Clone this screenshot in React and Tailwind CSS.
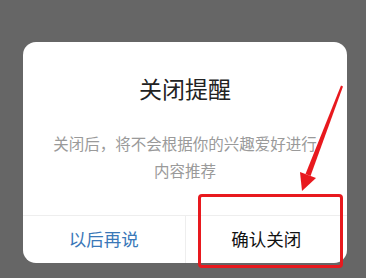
import React from 'react';

const font = { fontFamily: '"Noto Sans CJK SC", "Noto Sans", sans-serif' };

const Arrow = () => (
  <svg className="absolute inset-0 pointer-events-none" width="366" height="278" viewBox="0 0 366 278">
    <polygon points="341,85.5 343,86.5 310.5,175.9 305.5,174.1" fill="#e8191e" />
    <polygon points="302,191 300,172 316,178" fill="#e8191e" />
  </svg>
);

const App = () => {
  return (
    <div className="relative w-[366px] h-[278px] bg-[#666666] overflow-hidden" style={font}>
      <div className="pt-[42px] pl-[23px]">
        <div className="w-[324px] h-[221px] bg-white rounded-[13px] flex flex-col">
          <div className="pt-[31px] text-center text-[23px] leading-[30px] text-[#222]">关闭提醒</div>
          <p className="mt-[27px] text-center text-[15.5px] leading-[27px] text-[#9a9a9a]">
            关闭后，将不会根据你的兴趣爱好进行<br />内容推荐
          </p>
          <div className="mt-auto h-[48px] flex border-t border-[#eeeeee]">
            <button className="flex-1 text-[17.5px] text-[#3a78b8] border-r border-[#eeeeee]">以后再说</button>
            <button className="flex-1 text-[17.5px] text-[#111]">确认关闭</button>
          </div>
        </div>
      </div>
      <div className="absolute left-[198px] top-[194px] w-[145px] h-[74px] border-[3px] border-[#e8191e] rounded-[4px]" />
      <Arrow />
    </div>
  );
};

export default App;
